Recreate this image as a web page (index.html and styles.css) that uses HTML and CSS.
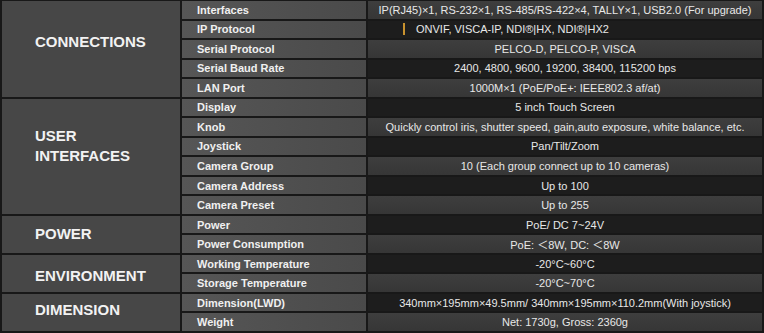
FILE: index.html
```html
<!DOCTYPE html>
<html lang="en">
<head>
    <meta charset="UTF-8">
    <meta name="viewport" content="width=device-width, initial-scale=1.0">
    <title>Controller Specifications</title>
    <link rel="stylesheet" href="styles.css">
</head>
<body>
    <div class="spec">
        <div class="group conn">CONNECTIONS</div>
        <div class="label">Interfaces</div>
        <div class="value alt">IP(RJ45)×1, RS-232×1, RS-485/RS-422×4, TALLY×1, USB2.0 (For upgrade)</div>
        <div class="label">IP Protocol</div>
        <div class="value left"><span class="caret"></span>ONVIF, VISCA-IP, NDI®|HX, NDI®|HX2</div>
        <div class="label">Serial Protocol</div>
        <div class="value alt">PELCO-D, PELCO-P, VISCA</div>
        <div class="label">Serial Baud Rate</div>
        <div class="value">2400, 4800, 9600, 19200, 38400, 115200 bps</div>
        <div class="label">LAN Port</div>
        <div class="value alt">1000M×1 (PoE/PoE+: IEEE802.3 af/at)</div>

        <div class="group user">USER<br>INTERFACES</div>
        <div class="label">Display</div>
        <div class="value">5 inch Touch Screen</div>
        <div class="label">Knob</div>
        <div class="value alt">Quickly control iris, shutter speed, gain,auto exposure, white balance, etc.</div>
        <div class="label">Joystick</div>
        <div class="value">Pan/Tilt/Zoom</div>
        <div class="label">Camera Group</div>
        <div class="value alt">10 (Each group connect up to 10 cameras)</div>
        <div class="label">Camera Address</div>
        <div class="value">Up to 100</div>
        <div class="label">Camera Preset</div>
        <div class="value alt">Up to 255</div>

        <div class="group power">POWER</div>
        <div class="label">Power</div>
        <div class="value">PoE/ DC 7~24V</div>
        <div class="label">Power Consumption</div>
        <div class="value alt">PoE: ＜8W, DC: ＜8W</div>

        <div class="group env">ENVIRONMENT</div>
        <div class="label">Working Temperature</div>
        <div class="value">-20°C~60°C</div>
        <div class="label">Storage Temperature</div>
        <div class="value alt">-20°C~70°C</div>

        <div class="group dim">DIMENSION</div>
        <div class="label">Dimension(LWD)</div>
        <div class="value">340mm×195mm×49.5mm/ 340mm×195mm×110.2mm(With joystick)</div>
        <div class="label">Weight</div>
        <div class="value alt">Net: 1730g, Gross: 2360g</div>
    </div>
</body>
</html>
```

FILE: styles.css
```css
body {
    margin: 0;
    background-color: #181818;
    font-family: "Liberation Sans", Arial, "Noto Sans CJK SC", sans-serif;
    color: #ececec;
}
.spec {
    display: grid;
    grid-template-columns: 178px 184px 1fr;
    grid-template-rows: repeat(17, 1fr);
    gap: 2px;
    width: 764px;
    height: 333px;
    padding: 1px 2px 2px 2px;
    box-sizing: border-box;
    background-color: #181818;
}
.group {
    grid-column: 1;
    display: flex;
    align-items: center;
    padding-left: 33px;
    background-color: #474747;
    font-size: 15px;
    font-weight: bold;
    line-height: 20px;
    color: #f2f2f2;
}
.conn {
    grid-row: span 5;
    padding-bottom: 14px;
}
.user {
    grid-row: span 6;
    padding-bottom: 20px;
}
.power {
    grid-row: span 2;
}
.env {
    grid-row: span 2;
    padding-top: 5px;
}
.dim {
    grid-row: span 2;
    padding-bottom: 4px;
}
.label {
    grid-column: 2;
    display: flex;
    align-items: center;
    padding-left: 15px;
    background: linear-gradient(to right, #565656, #4a4a4a);
    font-size: 11px;
    font-weight: bold;
    color: #f0f0f0;
}
.value {
    grid-column: 3;
    display: flex;
    align-items: center;
    justify-content: center;
    background-color: #1d1d1d;
    font-size: 11px;
    color: #e8e8e8;
    white-space: nowrap;
}
.value.alt {
    background: linear-gradient(#3e3e3e, #363636);
}
.value.left {
    justify-content: flex-start;
    padding-left: 35px;
}
.caret {
    display: inline-block;
    width: 2px;
    height: 12px;
    margin-right: 11px;
    background-color: #c8922e;
}
```
